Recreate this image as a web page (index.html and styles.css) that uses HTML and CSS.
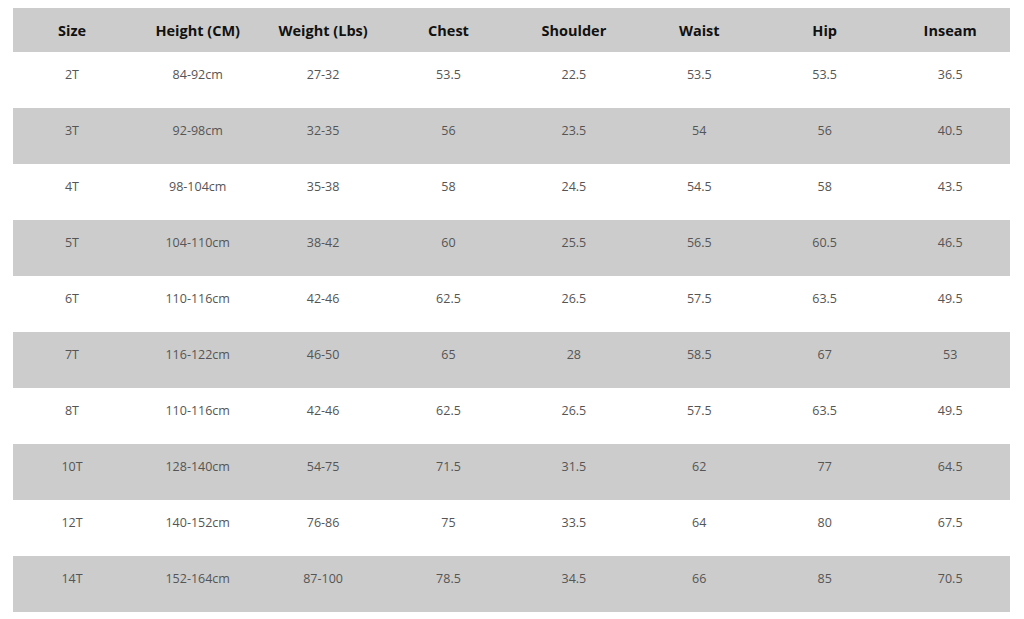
FILE: index.html
```html
<!DOCTYPE html>
<html lang="en">
<head>
<meta charset="utf-8">
<title>Size Chart</title>
<link rel="stylesheet" href="styles.css">
</head>
<body>
<div class="chart">
  <div class="row head">
    <div class="cell">Size</div><div class="cell">Height (CM)</div><div class="cell">Weight (Lbs)</div><div class="cell">Chest</div><div class="cell">Shoulder</div><div class="cell">Waist</div><div class="cell">Hip</div><div class="cell">Inseam</div>
  </div>
  <div class="row">
    <div class="cell">2T</div><div class="cell">84-92cm</div><div class="cell">27-32</div><div class="cell">53.5</div><div class="cell">22.5</div><div class="cell">53.5</div><div class="cell">53.5</div><div class="cell">36.5</div>
  </div>
  <div class="row alt">
    <div class="cell">3T</div><div class="cell">92-98cm</div><div class="cell">32-35</div><div class="cell">56</div><div class="cell">23.5</div><div class="cell">54</div><div class="cell">56</div><div class="cell">40.5</div>
  </div>
  <div class="row">
    <div class="cell">4T</div><div class="cell">98-104cm</div><div class="cell">35-38</div><div class="cell">58</div><div class="cell">24.5</div><div class="cell">54.5</div><div class="cell">58</div><div class="cell">43.5</div>
  </div>
  <div class="row alt">
    <div class="cell">5T</div><div class="cell">104-110cm</div><div class="cell">38-42</div><div class="cell">60</div><div class="cell">25.5</div><div class="cell">56.5</div><div class="cell">60.5</div><div class="cell">46.5</div>
  </div>
  <div class="row">
    <div class="cell">6T</div><div class="cell">110-116cm</div><div class="cell">42-46</div><div class="cell">62.5</div><div class="cell">26.5</div><div class="cell">57.5</div><div class="cell">63.5</div><div class="cell">49.5</div>
  </div>
  <div class="row alt">
    <div class="cell">7T</div><div class="cell">116-122cm</div><div class="cell">46-50</div><div class="cell">65</div><div class="cell">28</div><div class="cell">58.5</div><div class="cell">67</div><div class="cell">53</div>
  </div>
  <div class="row">
    <div class="cell">8T</div><div class="cell">110-116cm</div><div class="cell">42-46</div><div class="cell">62.5</div><div class="cell">26.5</div><div class="cell">57.5</div><div class="cell">63.5</div><div class="cell">49.5</div>
  </div>
  <div class="row alt">
    <div class="cell">10T</div><div class="cell">128-140cm</div><div class="cell">54-75</div><div class="cell">71.5</div><div class="cell">31.5</div><div class="cell">62</div><div class="cell">77</div><div class="cell">64.5</div>
  </div>
  <div class="row">
    <div class="cell">12T</div><div class="cell">140-152cm</div><div class="cell">76-86</div><div class="cell">75</div><div class="cell">33.5</div><div class="cell">64</div><div class="cell">80</div><div class="cell">67.5</div>
  </div>
  <div class="row alt">
    <div class="cell">14T</div><div class="cell">152-164cm</div><div class="cell">87-100</div><div class="cell">78.5</div><div class="cell">34.5</div><div class="cell">66</div><div class="cell">85</div><div class="cell">70.5</div>
  </div>
</div>
</body>
</html>
```

FILE: styles.css
```css
html, body {
  margin: 0;
  padding: 0;
  background: #ffffff;
}

body {
  font-family: "Open Sans", "Noto Sans", "Liberation Sans", sans-serif;
  padding: 8px 14px 0 13px;
}

.chart {
  width: 997px;
  display: flex;
  flex-direction: column;
}

.row {
  display: grid;
  grid-template-columns: 122px repeat(6, 125.4px) 1fr;
  height: 56px;
  background: #ffffff;
}

.row.alt {
  background: #cccccc;
}

.row.head {
  height: 44px;
  background: #cccccc;
  align-items: center;
}

.cell {
  text-align: center;
  font-size: 12.5px;
  line-height: 18px;
  color: #555555;
  padding-top: 14px;
}

.cell:first-child {
  padding-right: 4px;
}

.cell:last-child {
  padding-left: 3px;
}

.head .cell {
  padding-top: 2px;
  font-size: 14.5px;
  font-weight: 700;
  color: #111111;
  line-height: 20px;
}
```
